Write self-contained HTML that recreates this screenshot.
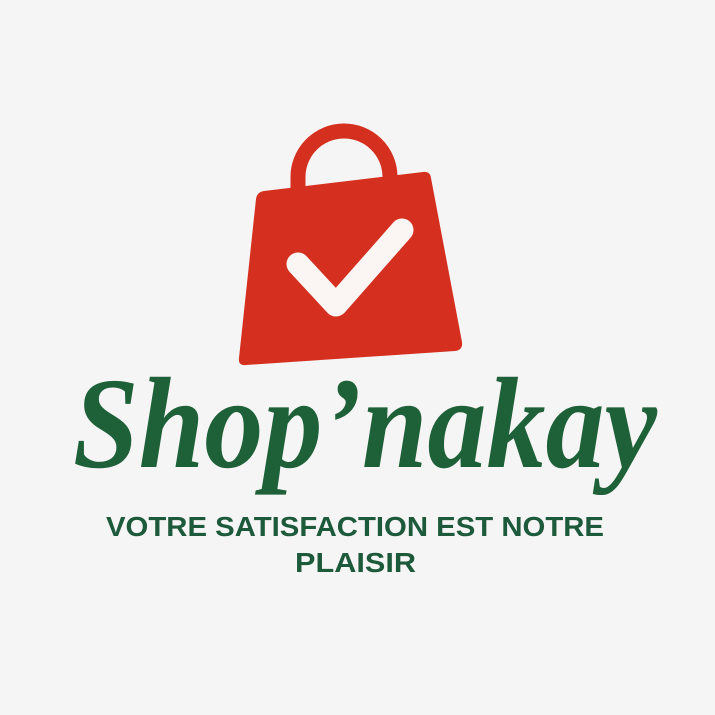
<!DOCTYPE html>
<html><head><meta charset="utf-8"><style>
html,body{margin:0;padding:0;background:#f6f5f5;}
svg{display:block}
</style></head><body>
<svg width="715" height="715" viewBox="0 0 715 715" xmlns="http://www.w3.org/2000/svg">
<rect width="715" height="715" fill="#f6f5f5"/>
<path d="M298 190 L298 178 A46 46 0 0 1 390 176 L390 180" fill="none" stroke="#d5301f" stroke-width="15"/>
<path d="M264 191 L423 172 Q430 171 431 178 L462 342 Q463 350 455 351 L246 365 Q238 366 239 358 L256 199 Q257 192 264 191 Z" fill="#d5301f"/>
<path d="M298 264 L336 305 L402 230" fill="none" stroke="#fbf6f4" stroke-width="23" stroke-linecap="round" stroke-linejoin="round"/>
<text x="73" y="467" font-family="Liberation Serif, serif" font-weight="bold" font-style="italic" font-size="130" fill="#1e6138" textLength="584" lengthAdjust="spacingAndGlyphs">Shop’nakay</text>
<text x="106" y="536" font-family="Liberation Sans, sans-serif" font-weight="bold" font-size="28" fill="#1d5a3c" textLength="498" lengthAdjust="spacingAndGlyphs">VOTRE SATISFACTION EST NOTRE</text>
<text x="295" y="572" font-family="Liberation Sans, sans-serif" font-weight="bold" font-size="28" fill="#1d5a3c" textLength="121" lengthAdjust="spacingAndGlyphs">PLAISIR</text>
</svg>
</body></html>
